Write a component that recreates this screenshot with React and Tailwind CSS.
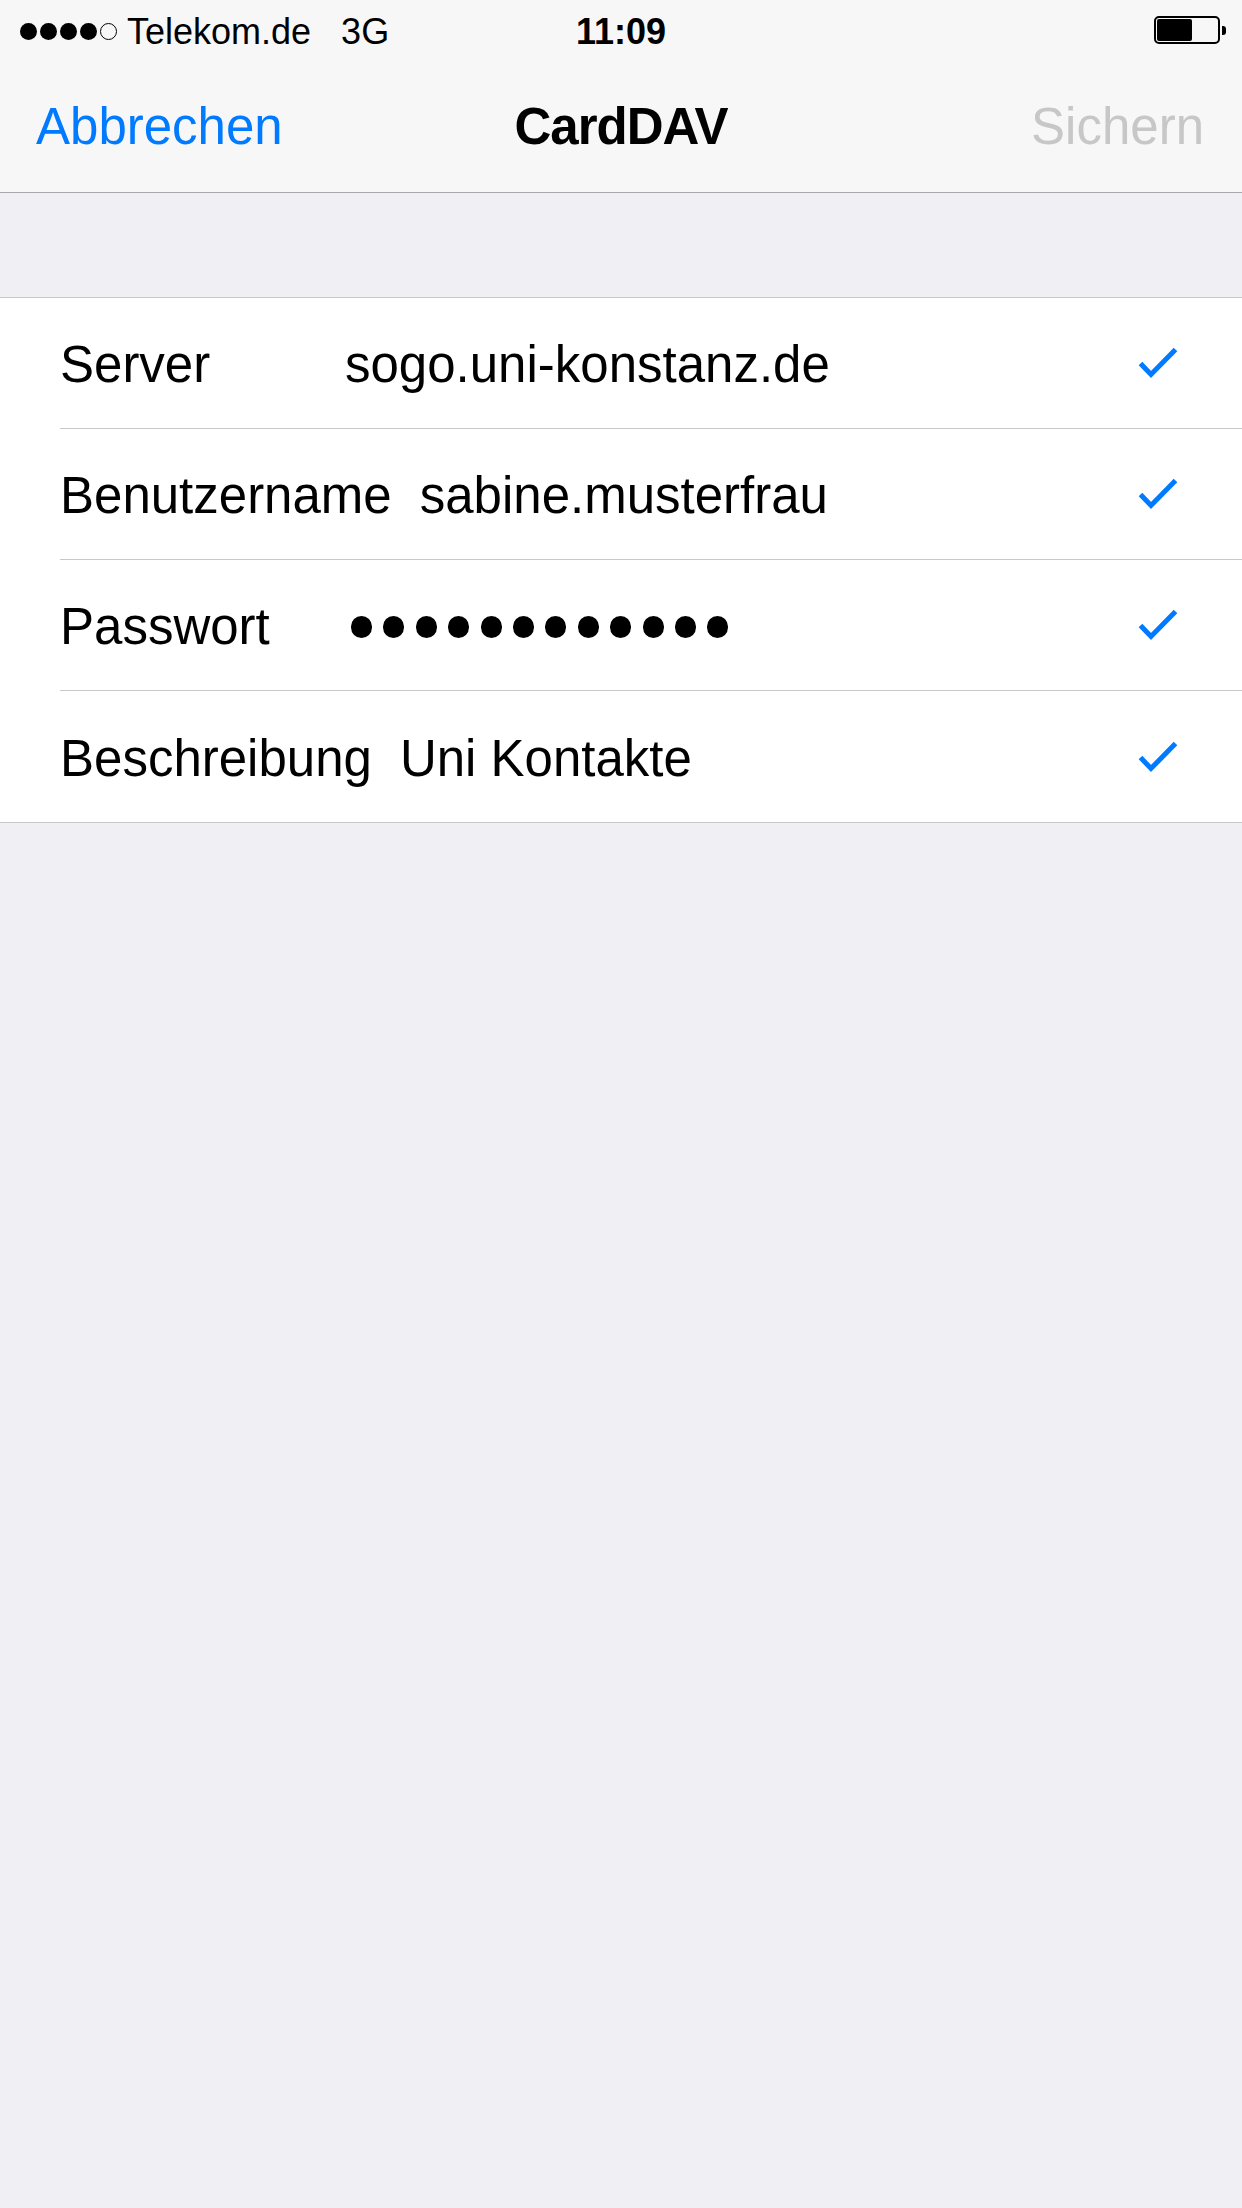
import React from "react";

const rows = [
  { label: "Server", value: "sogo.uni-konstanz.de" },
  { label: "Benutzername", value: "sabine.musterfrau" },
  { label: "Passwort", password: 12 },
  { label: "Beschreibung", value: "Uni Kontakte" },
];

function Check() {
  return (
    <svg width="40" height="32" viewBox="0 0 40 32" className="shrink-0">
      <path
        d="M2.5 16.5 L13 27.5 L37.5 2.5"
        fill="none"
        stroke="#007aff"
        strokeWidth="5"
        strokeLinejoin="miter"
      />
    </svg>
  );
}

function Battery() {
  return (
    <div className="flex items-center">
      <div className="w-[66px] h-[28px] rounded-[5px] border-[2px] border-black p-[1px] flex">
        <div className="w-[35px] h-full bg-black rounded-[2px]" />
      </div>
      <div className="w-[4px] h-[9px] bg-black rounded-r-[3px] ml-[2px]" />
    </div>
  );
}

export default function App() {
  return (
    <div
      className="w-full min-h-[2208px] bg-[#efeff4] text-black"
      style={{ fontFamily: '"Liberation Sans", Arial, Helvetica, sans-serif' }}
    >
      <div className="bg-[#f7f7f7] border-b border-[#a9a9ad]">
        {/* status bar */}
        <div className="h-[60px] grid grid-cols-3 items-center text-[36px] leading-none pt-[3px]">
          <div className="flex items-center pl-[20px]">
            <div className="flex items-center gap-[3px]">
              <span className="w-[17px] h-[17px] rounded-full bg-black" />
              <span className="w-[17px] h-[17px] rounded-full bg-black" />
              <span className="w-[17px] h-[17px] rounded-full bg-black" />
              <span className="w-[17px] h-[17px] rounded-full bg-black" />
              <span className="w-[17px] h-[17px] rounded-full border-[1.5px] border-black" />
            </div>
            <span className="ml-[10px]">Telekom.de</span>
            <span className="ml-[30px]">3G</span>
          </div>
          <div className="text-center font-bold">11:09</div>
          <div className="flex justify-end pr-[16px] -mt-[3px]">
            <Battery />
          </div>
        </div>
        {/* nav bar */}
        <div className="h-[132px] grid grid-cols-3 items-center text-[51px] leading-none pt-[1px]">
          <div className="pl-[36px] text-[#007aff]">Abbrechen</div>
          <div className="text-center font-bold tracking-[-1px]">CardDAV</div>
          <div className="text-right pr-[38px] text-[#c7c7c7]">Sichern</div>
        </div>
      </div>

      <div className="h-[104px]" />

      <div className="bg-white border-t border-b border-[#c8c7cc]">
        {rows.map((r, i) => (
          <div key={r.label} className="pl-[60px]">
            <div
              className={
                "h-[131px] flex items-center pr-[64px] text-[51px] leading-none " +
                (i < rows.length - 1 ? "border-b border-[#c8c7cc]" : "")
              }
            >
              <div className="min-w-[257px] whitespace-nowrap pt-[3px]">{r.label}</div>
              <div className="flex-1 ml-[28px] whitespace-nowrap pt-[3px]">
                {r.password ? (
                  <div className="flex items-center gap-[11.4px] pl-[6px]">
                    {Array.from({ length: r.password }).map((_, k) => (
                      <span key={k} className="w-[21px] h-[22px] rounded-full bg-black" />
                    ))}
                  </div>
                ) : (
                  r.value
                )}
              </div>
              <Check />
            </div>
          </div>
        ))}
      </div>
    </div>
  );
}
